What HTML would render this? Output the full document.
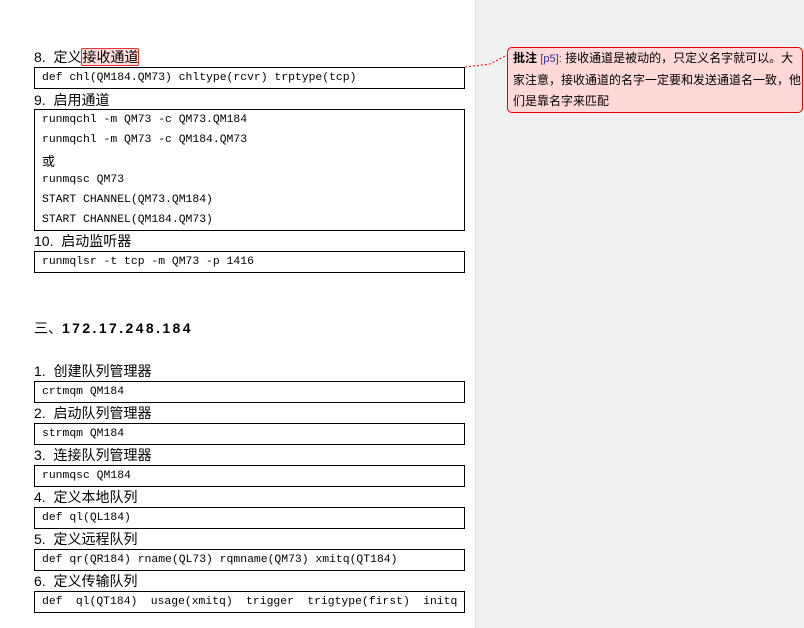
<!DOCTYPE html>
<html><head><meta charset="utf-8"><style>
body{margin:0;width:804px;height:628px;position:relative;background:#fff;overflow:hidden;font-family:"Liberation Sans","Noto Sans CJK SC",sans-serif;}
.side{position:absolute;left:475px;top:0;width:329px;height:628px;background:#f0f0f0;border-left:1px solid #e4e4e4;}
.lbl{position:absolute;left:34px;font-size:14px;line-height:16px;color:#000;white-space:nowrap;}
.box{position:absolute;left:34px;width:429px;border:1px solid #000;font-family:"Liberation Mono","Noto Sans CJK SC",monospace;font-size:11.4px;color:#000;white-space:nowrap;overflow:hidden;}
.box div{height:20px;line-height:21px;padding-left:7px;}
.hl{background:#fdd;border:1px solid #e33;border-radius:2px;}
.cm{position:absolute;left:507px;top:47px;width:289px;height:64px;background:#ffd8d8;border:1px solid #e00;border-radius:5px;font-size:12px;line-height:21px;padding:0 0 0 5px;color:#000;}
</style></head><body>
<div class="side"></div>
<svg style="position:absolute;left:0;top:0" width="804" height="628"><path d="M465 67 L490 64 L507 55" stroke="#e00" stroke-width="1" fill="none" stroke-dasharray="2,2"/></svg>
<div class="cm"><b>批注</b> <span style="color:#339;font-size:11px">[p5]:</span> 接收通道是被动的，只定义名字就可以。大家注意，接收通道的名字一定要和发送通道名一致，他们是靠名字来匹配</div>

<div class="lbl" style="top:49px">8.&nbsp; 定义<span class="hl">接收通道</span></div>
<div class="box" style="top:67px;height:20px"><div>def chl(QM184.QM73) chltype(rcvr) trptype(tcp)</div></div>
<div class="lbl" style="top:92px">9.&nbsp; 启用通道</div>
<div class="box" style="top:109px;height:120px">
<div>runmqchl -m QM73 -c QM73.QM184</div>
<div>runmqchl -m QM73 -c QM184.QM73</div>
<div style="font-family:'Noto Sans CJK SC',sans-serif;font-size:13px">或</div>
<div>runmqsc QM73</div>
<div>START CHANNEL(QM73.QM184)</div>
<div>START CHANNEL(QM184.QM73)</div>
</div>
<div class="lbl" style="top:233px">10.&nbsp; 启动监听器</div>
<div class="box" style="top:251px;height:20px"><div>runmqlsr -t tcp -m QM73 -p 1416</div></div>

<div class="lbl" style="top:320px;font-size:14px">三、<b style="letter-spacing:2.4px">172.17.248.184</b></div>

<div class="lbl" style="top:363px">1.&nbsp; 创建队列管理器</div>
<div class="box" style="top:381px;height:20px"><div>crtmqm QM184</div></div>
<div class="lbl" style="top:405px">2.&nbsp; 启动队列管理器</div>
<div class="box" style="top:423px;height:20px"><div>strmqm QM184</div></div>
<div class="lbl" style="top:447px">3.&nbsp; 连接队列管理器</div>
<div class="box" style="top:465px;height:20px"><div>runmqsc QM184</div></div>
<div class="lbl" style="top:489px">4.&nbsp; 定义本地队列</div>
<div class="box" style="top:507px;height:20px"><div>def ql(QL184)</div></div>
<div class="lbl" style="top:531px">5.&nbsp; 定义远程队列</div>
<div class="box" style="top:549px;height:20px"><div>def qr(QR184) rname(QL73) rqmname(QM73) xmitq(QT184)</div></div>
<div class="lbl" style="top:573px">6.&nbsp; 定义传输队列</div>
<div class="box" style="top:591px;height:20px"><div style="word-spacing:6.5px">def ql(QT184) usage(xmitq) trigger trigtype(first) initq</div></div>
</body></html>
